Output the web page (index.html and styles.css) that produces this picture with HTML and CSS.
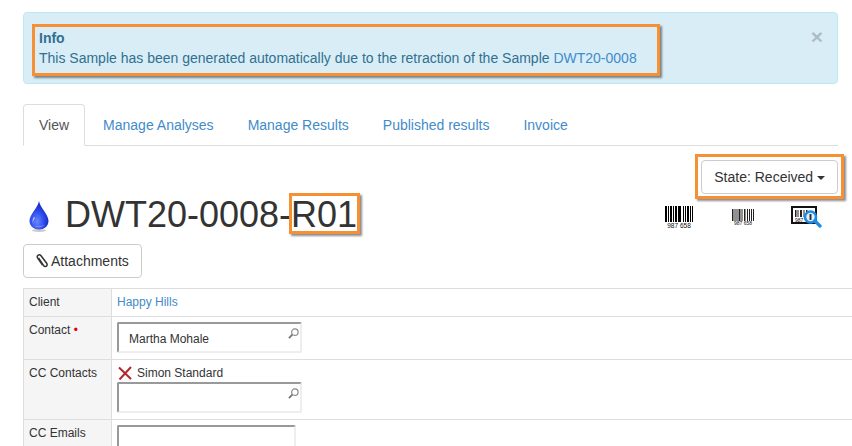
FILE: index.html
```html
<!DOCTYPE html>
<html lang="en">
<head>
<meta charset="utf-8">
<title>DWT20-0008-R01</title>
<link rel="stylesheet" href="styles.css">
</head>
<body>
<div class="page">
  <div class="alert">
    <span class="close">×</span>
    <div class="alert-title">Info</div>
    <div>This Sample has been generated automatically due to the retraction of the Sample <a href="#">DWT20-0008</a></div>
  </div>

  <nav class="tabs">
    <a class="tab active" href="#">View</a>
    <a class="tab" href="#">Manage Analyses</a>
    <a class="tab" href="#">Manage Results</a>
    <a class="tab" href="#">Published results</a>
    <a class="tab" href="#">Invoice</a>
  </nav>

  <div class="state-row">
    <button class="btn">State: Received <span class="caret"></span></button>
  </div>

  <div class="title-row">
    <svg class="drop" width="20" height="31" viewBox="0 0 20 31">
      <defs>
        <radialGradient id="dropFill" cx="0.4" cy="0.72" r="0.7">
          <stop offset="0" stop-color="#6a86ff"/>
          <stop offset="0.55" stop-color="#2a48ea"/>
          <stop offset="1" stop-color="#0e22b0"/>
        </radialGradient>
      </defs>
      <ellipse cx="10" cy="29.500" rx="7" ry="1.400" fill="#c9c9c9"/>
      <path d="M10 0C11 7 19.500 13 19.500 20C19.500 25 15 28.500 10 28.500C5 28.500 .5 25 .5 20C.5 13 9 7 10 0Z" fill="url(#dropFill)"/>
      <path d="M5 16C3.500 18 3 21 4.500 23.500C3.500 20.500 4.500 18.500 6 17Z" fill="#c4d2ff"/>
      <path d="M6 25C9 27 13 26.500 15.500 23.500C13 25.500 9.500 25.800 6 25Z" fill="#8fa5ff"/>
    </svg>
    <h1 class="title">DWT20-0008-R01</h1>
    <div class="codes">
      <svg class="code-a" width="28" height="26" viewBox="0 0 28 26">
        <path d="M0 0h2v16h-2zM3 0h1v16h-1zM5 0h2v16h-2zM8 0h1v16h-1zM10 0h2v16h-2zM13 0h3v16h-3zM18 0h1v16h-1zM20 0h1v16h-1zM22 0h2v16h-2zM25 0h1v16h-1zM27 0h1v16h-1z" fill="#000"/>
        <text x="14" y="22" text-anchor="middle" class="code-text">987 658</text>
      </svg>
      <svg class="code-b" width="22" height="20" viewBox="0 0 22 20">
        <path d="M0 0h1.500v12h-1.500zM2.500 0h1v12h-1zM4.500 0h1v12h-1zM6.500 0h2v12h-2zM9.500 0h1v12h-1zM12 0h1.500v12h-1.500zM15 0h1v12h-1zM17 0h1v12h-1zM19 0h1v12h-1zM21 0h1v12h-1z" fill="#222"/>
        <text x="11" y="16" text-anchor="middle" class="code-text small">987 658</text>
      </svg>
      <svg class="code-c" width="31" height="22" viewBox="0 0 31 22">
        <rect x="1" y="1" width="24" height="16" fill="#fff" stroke="#111" stroke-width="2"/>
        <path d="M4 4h1.500v7h-1.500zM6.500 4h1v7h-1zM9 4h2v7h-2zM12.500 4h1v7h-1zM15 4h1.500v7h-1.500z" fill="#222"/>
        <text x="4" y="15.500" class="code-text small">987</text>
        <circle cx="19.500" cy="11" r="5.500" fill="#dff0ff" stroke="#1e8ce6" stroke-width="2.600"/>
        <path d="M19.500 8V14" stroke="#333" stroke-width="2"/>
        <path d="M24 15L29 20" stroke="#1e8ce6" stroke-width="3.200" stroke-linecap="round"/>
      </svg>
    </div>
  </div>

  <button class="btn attach">
    <svg class="clip" width="12" height="14" viewBox="0 0 12 14">
      <path d="M2.500 4L7.500 11.500C8.600 13 10.300 12.600 10.800 11.800C11.300 11 11.200 10 10.500 9L5 1.800C4.200 .8 3 .7 2.200 1.200C1.300 1.800 1 3 1.700 4.100L6.500 11" fill="none" stroke="#333" stroke-width="1.500"/>
    </svg>Attachments
  </button>

  <div class="form-wrap">
    <table class="form">
      <tr class="row-client">
        <th>Client</th>
        <td><a href="#">Happy Hills</a></td>
      </tr>
      <tr class="row-contact">
        <th>Contact <span class="req">•</span></th>
        <td>
          <div class="lookup filled">Martha Mohale
            <svg class="search" width="11" height="11" viewBox="0 0 12 12"><circle cx="7.500" cy="4.500" r="3.500" fill="none" stroke="#888" stroke-width="1.300"/><path d="M5 7L1 11" stroke="#777" stroke-width="2"/></svg>
          </div>
        </td>
      </tr>
      <tr class="row-cc">
        <th>CC Contacts</th>
        <td>
          <div class="chip">
            <svg width="14" height="14" viewBox="0 0 14 14"><path d="M1 1.500L13 13M13 1L1.500 13.500" stroke="#b3272c" stroke-width="2"/></svg>
            <span>Simon Standard</span>
          </div>
          <div class="lookup">
            <svg class="search" width="11" height="11" viewBox="0 0 12 12"><circle cx="7.500" cy="4.500" r="3.500" fill="none" stroke="#888" stroke-width="1.300"/><path d="M5 7L1 11" stroke="#777" stroke-width="2"/></svg>
          </div>
        </td>
      </tr>
      <tr class="row-emails">
        <th>CC Emails</th>
        <td><div class="textbox"></div></td>
      </tr>
    </table>
  </div>

  <div class="mark mark-info"></div>
  <div class="mark mark-state"></div>
  <div class="mark mark-id"></div>
</div>
</body>
</html>
```
FILE: styles.css
```css
* { box-sizing: border-box; }
html, body { margin: 0; height: 446px; overflow: hidden; background: #fff; }
body { font-family: "Liberation Sans", Arial, sans-serif; font-size: 14px; line-height: 20px; color: #333; }
a { color: #428bca; text-decoration: none; }

.page { position: relative; width: 852px; height: 446px; overflow: hidden; padding: 12px 14px 0 23px; }

.alert { position: relative; height: 72px; padding: 15px; background: #d9edf7; border: 1px solid #bce8f1; border-radius: 4px; color: #31708f; }
.alert-title { font-weight: 700; }
.close { position: absolute; top: 13px; right: 14px; font-size: 21px; line-height: 21px; font-weight: 700; color: #000; opacity: .2; }

.tabs { display: flex; gap: 2px; height: 42px; margin-top: 20px; border-bottom: 1px solid #ddd; }
.tab { height: 42px; padding: 10px 15px; border: 1px solid transparent; border-radius: 4px 4px 0 0; }
.tab.active { color: #555; background: #fff; border-color: #ddd #ddd #fff; }

.state-row { display: flex; justify-content: flex-end; margin-top: 14px; }
.btn { height: 34px; padding: 6px 12px; font: inherit; color: #333; background: #fff; border: 1px solid #ccc; border-radius: 4px; }
.caret { display: inline-block; margin-left: 0; vertical-align: middle; border-top: 4px solid #333; border-left: 4px solid transparent; border-right: 4px solid transparent; }

.title-row { display: flex; align-items: center; height: 38px; padding-left: 6px; margin-top: 2px; }
.drop { flex: none; margin-top: 2px; }
.title { margin: 0 0 0 16px; font-size: 36px; line-height: 40px; font-weight: 400; color: #333; }
.codes { flex: 1; height: 38px; display: flex; align-items: flex-start; padding: 10px 0 0 308px; }
.codes svg { flex: none; }
.code-b { margin: 3px 0 0 39px; }
.code-c { margin-left: 37px; }
.code-text { font-family: "Liberation Sans", Arial, sans-serif; font-size: 6.500px; fill: #111; }
.code-text.small { font-size: 5px; }

.attach { display: flex; align-items: center; width: 119px; margin-top: 10px; padding: 6px 12px; white-space: nowrap; }
.clip { flex: none; margin-right: 3px; }

.form-wrap { width: 900px; margin-top: 10px; }
.form { width: 100%; border-collapse: collapse; table-layout: fixed; font-size: 12px; line-height: 16px; }
.form th, .form td { border: 1px solid #ddd; vertical-align: top; text-align: left; font-weight: 400; }
.form th { width: 88px; padding: 5px 5px; background: #f5f5f5; }
.form td { padding: 5px 5px; }
.row-client th, .row-client td { height: 28px; }
.row-contact th, .row-contact td { height: 43px; }
.row-cc th, .row-cc td { height: 60px; }
.row-emails th, .row-emails td { height: 60px; }
.req { color: #e60000; font-size: 12px; line-height: 12px; }

.lookup { position: relative; width: 185px; height: 31px; padding: 7px 10px; border: 2px solid; border-color: #999 #eee #eee #999; border-radius: 2px; background: #fff; }
.search { position: absolute; top: 4px; right: 1px; }
.chip { display: flex; align-items: center; gap: 5px; height: 16px; margin: 0 0 1px 1px; }
.textbox { width: 179px; height: 40px; border: 2px solid; border-color: #999 #eee #eee #999; border-radius: 2px; background: #fff; }

.mark { position: absolute; border: 3px solid #f59134; box-shadow: 2px 2px 2px rgba(0, 0, 0, .45); pointer-events: none; }
.mark-info { left: 32px; top: 24px; width: 628px; height: 52px; }
.mark-state { left: 695px; top: 154px; width: 149px; height: 45px; }
.mark-id { left: 289px; top: 193px; width: 71px; height: 41px; }
```
